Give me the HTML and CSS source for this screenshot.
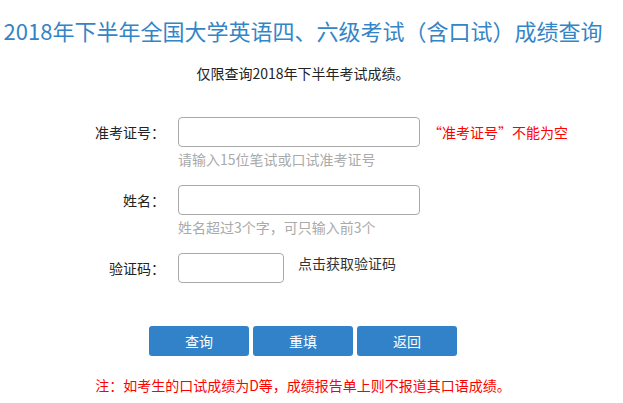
FILE: index.html
```html
<!DOCTYPE html>
<html lang="zh-CN">
<head>
<meta charset="utf-8">
<title>成绩查询</title>
<link rel="stylesheet" href="styles.css">
</head>
<body>
<div class="page">
  <h1 class="title">2018年下半年全国大学英语四、六级考试（含口试）成绩查询</h1>
  <p class="subtitle">仅限查询2018年下半年考试成绩。</p>
  <form class="form">
    <div class="row">
      <label class="label">准考证号<span class="punct">：</span></label>
      <div class="field">
        <div class="line">
          <input class="input" type="text">
          <span class="error">“准考证号”不能为空</span>
        </div>
        <div class="hint">请输入15位笔试或口试准考证号</div>
      </div>
    </div>
    <div class="row">
      <label class="label">姓名<span class="punct">：</span></label>
      <div class="field">
        <div class="line">
          <input class="input" type="text">
        </div>
        <div class="hint">姓名超过3个字<span class="punct">，</span>可只输入前3个</div>
      </div>
    </div>
    <div class="row">
      <label class="label">验证码<span class="punct">：</span></label>
      <div class="field">
        <div class="line">
          <input class="input input-small" type="text">
          <span class="captcha">点击获取验证码</span>
        </div>
      </div>
    </div>
    <div class="buttons">
      <button type="button" class="btn">查询</button>
      <button type="button" class="btn">重填</button>
      <button type="button" class="btn">返回</button>
    </div>
  </form>
  <p class="note">注<span class="punct">：</span>如考生的口试成绩为D等<span class="punct">，</span>成绩报告单上则不报道其口语成绩。</p>
</div>
</body>
</html>
```

FILE: styles.css
```css
* { box-sizing: border-box; }
body {
  margin: 0;
  background: #fff;
  font-family: "Noto Sans CJK SC", "Noto Sans", sans-serif;
  font-size: 14px;
  color: #333;
}
.page {
  width: 606px;
  text-align: center;
}
.title {
  margin: 0;
  padding-top: 15px;
  font-size: 22px;
  line-height: 30px;
  font-weight: normal;
  color: #3385c6;
  white-space: nowrap;
}
.subtitle {
  margin: 18px 0 0;
  line-height: 20px;
  color: #222;
}
.punct {
  font-family: "Noto Sans CJK TC", "Noto Sans CJK SC", sans-serif;
}
.form {
  margin-top: 34px;
  text-align: left;
}
.row {
  display: flex;
  align-items: flex-start;
  margin-bottom: 16px;
}
.row:last-of-type { margin-bottom: 0; }
.label {
  width: 165px;
  text-align: right;
  line-height: 30px;
  color: #222;
  margin-right: 13px;
}
.field {
  display: flex;
  flex-direction: column;
}
.line {
  display: flex;
  align-items: flex-start;
}
.input {
  width: 242px;
  height: 30px;
  border: 1px solid #a9a9a9;
  border-radius: 4px;
  background: #fff;
  margin: 0;
  padding: 0 6px;
  font: inherit;
}
.input-small { width: 106px; }
.error {
  margin-left: 8px;
  line-height: 30px;
  color: #f00;
  white-space: nowrap;
}
.captcha {
  margin-left: 14px;
  line-height: 20px;
  color: #333;
}
.hint {
  line-height: 20px;
  margin-top: 2px;
  color: #aaa;
}
.buttons {
  display: flex;
  justify-content: center;
  gap: 4px;
  margin-top: 43px;
}
.btn {
  width: 100px;
  height: 30px;
  border: 0;
  border-radius: 3px;
  background: #3182c8;
  color: #fff;
  font: inherit;
  padding: 0;
  cursor: pointer;
}
.note {
  margin: 19px 0 0;
  line-height: 20px;
  color: #f00;
}
```
